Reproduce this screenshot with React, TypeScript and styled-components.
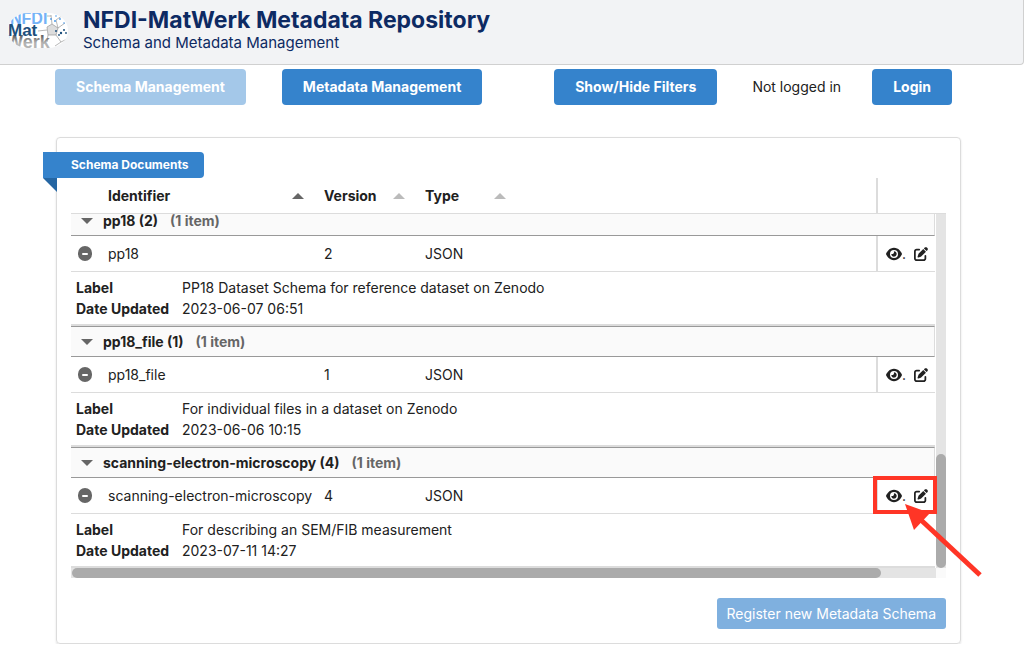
import React from "react";
import styled, { createGlobalStyle } from "styled-components";
import { FaEye, FaPenToSquare } from "react-icons/fa6";

const GlobalStyle = createGlobalStyle`
  *, *::before, *::after { box-sizing: border-box; }
  body {
    margin: 0;
    background: #fff;
    color: #212121;
    font: 14px/21px Inter, "Liberation Sans", sans-serif;
  }
  button { font: inherit; cursor: pointer; }
`;

const Header = styled.header`
  display: flex;
  align-items: flex-start;
  gap: 15px;
  height: 65px;
  padding: 8px 8px 0;
  background: #f2f3f5;
  border: solid #d0d0d0;
  border-width: 0 1px 1px 0;
  border-radius: 0 0 4px 0;
  color: #0d2a63;
`;

const Logo = styled.svg`
  width: 60px;
  height: 36px;
  margin-top: 5px;
`;

const Title = styled.h1`
  margin: 0;
  font-size: 23px;
  line-height: 24px;
  font-weight: 700;
`;

const Subtitle = styled.p`
  margin: 0;
  font-size: 15px;
  line-height: 22px;
`;

const Toolbar = styled.nav`
  display: flex;
  align-items: center;
  gap: 35px;
  padding: 4px 72px 0 55px;
`;

const Session = styled.div`
  display: flex;
  align-items: center;
  gap: 31px;
`;

const Status = styled.span`
  padding-bottom: 2px;
`;

const NavGroup = styled.div`
  display: flex;
  gap: 36px;
  margin-right: auto;
`;

const NavButton = styled.button`
  height: 36px;
  padding: 0 21px 2px;
  border: 0;
  border-radius: 4px;
  background: #3583cc;
  color: #fff;
  font-weight: 700;
  white-space: nowrap;
  &:disabled { background: #a4c8e9; }
`;

const Card = styled.main`
  position: relative;
  margin: 32px 63px 0 56px;
  padding: 14px 14px 14px;
  border: 1px solid #dcdcdc;
  border-radius: 4px;
  box-shadow: 0 1px 2px rgba(34, 36, 38, 0.15);
`;

const Ribbon = styled.h2`
  position: relative;
  width: fit-content;
  margin: 0 0 0 -28px;
  padding: 0 16px 0 28px;
  border-radius: 0 4px 4px 0;
  background: #3583cc;
  color: #fff;
  font-size: 12px;
  line-height: 26px;
  font-weight: 700;
  &::after {
    content: "";
    position: absolute;
    top: 100%;
    left: 0;
    border: solid transparent;
    border-width: 0 14px 14px 0;
    border-right-color: #2566a3;
  }
`;

const Grid = styled.table`
  width: 100%;
  table-layout: fixed;
  border-collapse: separate;
  border-spacing: 0;
  th, td { padding: 0 7px; text-align: left; white-space: nowrap; }
`;

const HeadWrap = styled.div`
  padding-right: 11px;
  border-bottom: 1px solid #dcdcdc;
`;

const HeadCell = styled.th`
  height: 35px;
  font-weight: 700;
`;

const SortLabel = styled.span`
  display: flex;
  align-items: center;
  justify-content: space-between;
  padding-right: 6px;
`;

const Triangle = styled.svg<{ $active?: boolean }>`
  width: 12px;
  height: 6px;
  fill: ${(p) => (p.$active ? "#666" : "#bbb")};
`;

const Scroller = styled.div`
  display: grid;
  grid-template-columns: minmax(0, 1fr) 10px;
  grid-template-rows: 354px 10px;
`;

const Viewport = styled.div`
  display: flex;
  flex-direction: column;
  justify-content: flex-end;
  overflow: hidden;
  padding-right: 1px;
`;

const Track = styled.div<{ $vertical?: boolean }>`
  display: flex;
  justify-content: ${(p) => (p.$vertical ? "flex-end" : "flex-start")};
  flex-direction: ${(p) => (p.$vertical ? "column" : "row")};
  padding-left: ${(p) => (p.$vertical ? 0 : 1)}px;
  background: #e4e4e4;
`;

const Thumb = styled.div<{ $vertical?: boolean }>`
  width: ${(p) => (p.$vertical ? "100%" : "93.6%")};
  height: ${(p) => (p.$vertical ? "32.2%" : "100%")};
  border-radius: 5px;
  background: #ababab;
`;

const Corner = styled.div`
  background: #fafafa;
`;

const GroupCell = styled.th`
  height: 31px;
  background: #fafafa;
  border: solid #999;
  border-width: 1px 0;
  border-right: 1px solid #dcdcdc;
  font-weight: 700;
`;

const GroupTitle = styled.span`
  display: flex;
  align-items: center;
  padding-left: 3px;
  ${Triangle} { margin-right: 10px; transform: rotate(180deg); }
`;

const Count = styled.span`
  margin-left: 12px;
  color: #666;
`;

const Cell = styled.td`
  height: 36px;
  border-bottom: 1px solid #dcdcdc;
`;

const Pinned = styled(Cell)`
  border-left: 2px solid #dcdcdc;
`;

const PinnedHead = styled(HeadCell)`
  border-left: 2px solid #dcdcdc;
`;

const IconButton = styled.button`
  display: flex;
  align-items: center;
  padding: 0;
  border: 0;
  background: none;
  color: #212121;
`;

const Actions = styled.span`
  display: flex;
  align-items: center;
  gap: 8px;
  padding-left: 1px;
`;

const DetailCell = styled.td`
  border: solid #dcdcdc;
  border-width: 0 0 2px;
`;

const Details = styled.dl`
  display: grid;
  grid-template-columns: 106px 1fr;
  margin: 0 0 0 -2px;
  padding: 5px 0;
  dt { font-weight: 700; }
  dd { margin: 0; }
`;

const Footer = styled.footer`
  display: flex;
  justify-content: flex-end;
  padding-top: 20px;
`;

const RegisterButton = styled.button`
  height: 31px;
  padding: 0 10px;
  border: 0;
  border-radius: 3px;
  background: #7fb0df;
  color: #fff;
  white-space: nowrap;
`;

const Callout = styled.svg`
  position: absolute;
  top: 338px;
  right: -24px;
  width: 111px;
  height: 104px;
  pointer-events: none;
`;

interface Schema {
  id: string;
  version: number;
  label: string;
  updated: string;
}

const schemas: Schema[] = [
  { id: "pp18", version: 2, label: "PP18 Dataset Schema for reference dataset on Zenodo", updated: "2023-06-07 06:51" },
  { id: "pp18_file", version: 1, label: "For individual files in a dataset on Zenodo", updated: "2023-06-06 10:15" },
  { id: "scanning-electron-microscopy", version: 4, label: "For describing an SEM/FIB measurement", updated: "2023-07-11 14:27" },
];

const Columns = () => (
  <colgroup>
    <col width="30" />
    <col width="216" />
    <col width="101" />
    <col width="101" />
    <col />
    <col width="59" />
  </colgroup>
);

const Arrow = ({ active }: { active?: boolean }) => (
  <Triangle $active={active} viewBox="0 0 12 6" aria-hidden="true">
    <path d="M0 6 6 0l6 6z" />
  </Triangle>
);

const SortHead = ({ children, active }: { children: string; active?: boolean }) => (
  <HeadCell scope="col" aria-sort={active ? "ascending" : "none"}>
    <SortLabel>
      {children}
      <Arrow active={active} />
    </SortLabel>
  </HeadCell>
);

const SchemaRows = ({ schema }: { schema: Schema }) => (
  <tbody>
    <tr>
      <GroupCell colSpan={6} scope="rowgroup">
        <GroupTitle>
          <Arrow active />
          {schema.id} ({schema.version})<Count>(1 item)</Count>
        </GroupTitle>
      </GroupCell>
    </tr>
    <tr>
      <Cell>
        <IconButton aria-label="Collapse details">
          <svg width="14" height="15" viewBox="0 0 14 15">
            <rect width="14" height="15" rx="7" fill="#666" />
            <rect x="4" y="7" width="6" height="2" rx="1" fill="#fff" />
          </svg>
        </IconButton>
      </Cell>
      <Cell>{schema.id}</Cell>
      <Cell>{schema.version}</Cell>
      <Cell>JSON</Cell>
      <Cell />
      <Pinned>
        <Actions>
          <IconButton aria-label="View">
            <FaEye size={16} />.
          </IconButton>
          <IconButton aria-label="Edit">
            <FaPenToSquare size={14} />
          </IconButton>
        </Actions>
      </Pinned>
    </tr>
    <tr>
      <DetailCell colSpan={6}>
        <Details>
          <dt>Label</dt>
          <dd>{schema.label}</dd>
          <dt>Date Updated</dt>
          <dd>{schema.updated}</dd>
        </Details>
      </DetailCell>
    </tr>
  </tbody>
);

const MatWerkLogo = () => (
  <Logo viewBox="0 0 60 36" role="img" aria-label="NFDI MatWerk">
    <defs>
      <clipPath id="badge">
        <rect width="60" height="35" rx="20" ry="17" />
      </clipPath>
      <linearGradient id="fade" x1="0" y1="0" x2="0" y2="1">
        <stop offset="0.2" stopColor="#666" />
        <stop offset="0.55" stopColor="#b4b4b4" />
      </linearGradient>
    </defs>
    <g clipPath="url(#badge)">
      <rect width="60" height="36" fill="#fff" />
      <g fill="none" stroke="#999" strokeWidth="0.7">
        <path d="M39 14l5-3 6 4-2 7-8 0z" fill="#ddd" />
        <path d="M30 18l9-1M44 11l-1-9M50 15l7-5M48 22l5 7M40 22l-1 7M50 15l-2-8 7-5M53 29l6-3M53 29l-6 4M43 3l-4 0" />
      </g>
      <g fontFamily="Liberation Sans, sans-serif" fontWeight="700">
        <text x="2" y="11" fontSize="16" fill="#74b2f7">NFDI</text>
        <text x="-2" y="35" fontSize="18" fill="url(#fade)">Werk</text>
        <text x="0" y="23" fontSize="17" fill="#1c4f7c">Mat</text>
      </g>
      <g fill="#4d9bea">
        <circle cx="43" cy="6" r="0.9" /><circle cx="47" cy="8" r="1" /><circle cx="52" cy="6" r="0.9" />
        <circle cx="56" cy="10" r="0.8" /><circle cx="48" cy="3" r="0.8" />
      </g>
      <g fill="#1c4f7c">
        <circle cx="48" cy="18" r="1" /><circle cx="53" cy="20" r="1.2" /><circle cx="56" cy="17" r="1" />
        <circle cx="51" cy="22" r="0.9" /><circle cx="58" cy="20" r="0.9" />
      </g>
    </g>
  </Logo>
);

export default function App() {
  return (
    <>
      <GlobalStyle />
      <Header>
        <MatWerkLogo />
        <div>
          <Title>NFDI-MatWerk Metadata Repository</Title>
          <Subtitle>Schema and Metadata Management</Subtitle>
        </div>
      </Header>
      <Toolbar>
        <NavGroup>
          <NavButton disabled>Schema Management</NavButton>
          <NavButton>Metadata Management</NavButton>
        </NavGroup>
        <NavButton>Show/Hide Filters</NavButton>
        <Session>
          <Status>Not logged in</Status>
          <NavButton>Login</NavButton>
        </Session>
      </Toolbar>
      <Card>
        <Ribbon>Schema Documents</Ribbon>
        <HeadWrap>
          <Grid>
            <Columns />
            <thead>
              <tr>
                <HeadCell />
                <SortHead active>Identifier</SortHead>
                <SortHead>Version</SortHead>
                <SortHead>Type</SortHead>
                <HeadCell />
                <PinnedHead />
              </tr>
            </thead>
          </Grid>
        </HeadWrap>
        <Scroller>
          <Viewport>
            <Grid>
              <Columns />
              {schemas.map((schema) => (
                <SchemaRows key={schema.id} schema={schema} />
              ))}
            </Grid>
          </Viewport>
          <Track $vertical>
            <Thumb $vertical />
          </Track>
          <Track>
            <Thumb />
          </Track>
          <Corner />
        </Scroller>
        <Footer>
          <RegisterButton>Register new Metadata Schema</RegisterButton>
        </Footer>
        <Callout viewBox="0 0 111 104" aria-hidden="true">
          <rect x="2" y="2" width="60" height="34" fill="none" stroke="#ff3526" strokeWidth="4" />
          <path d="M48 44 107 99" stroke="#ff3526" strokeWidth="5" />
          <path d="M32 28 57 37 41 54z" fill="#ff3526" />
        </Callout>
      </Card>
    </>
  );
}
